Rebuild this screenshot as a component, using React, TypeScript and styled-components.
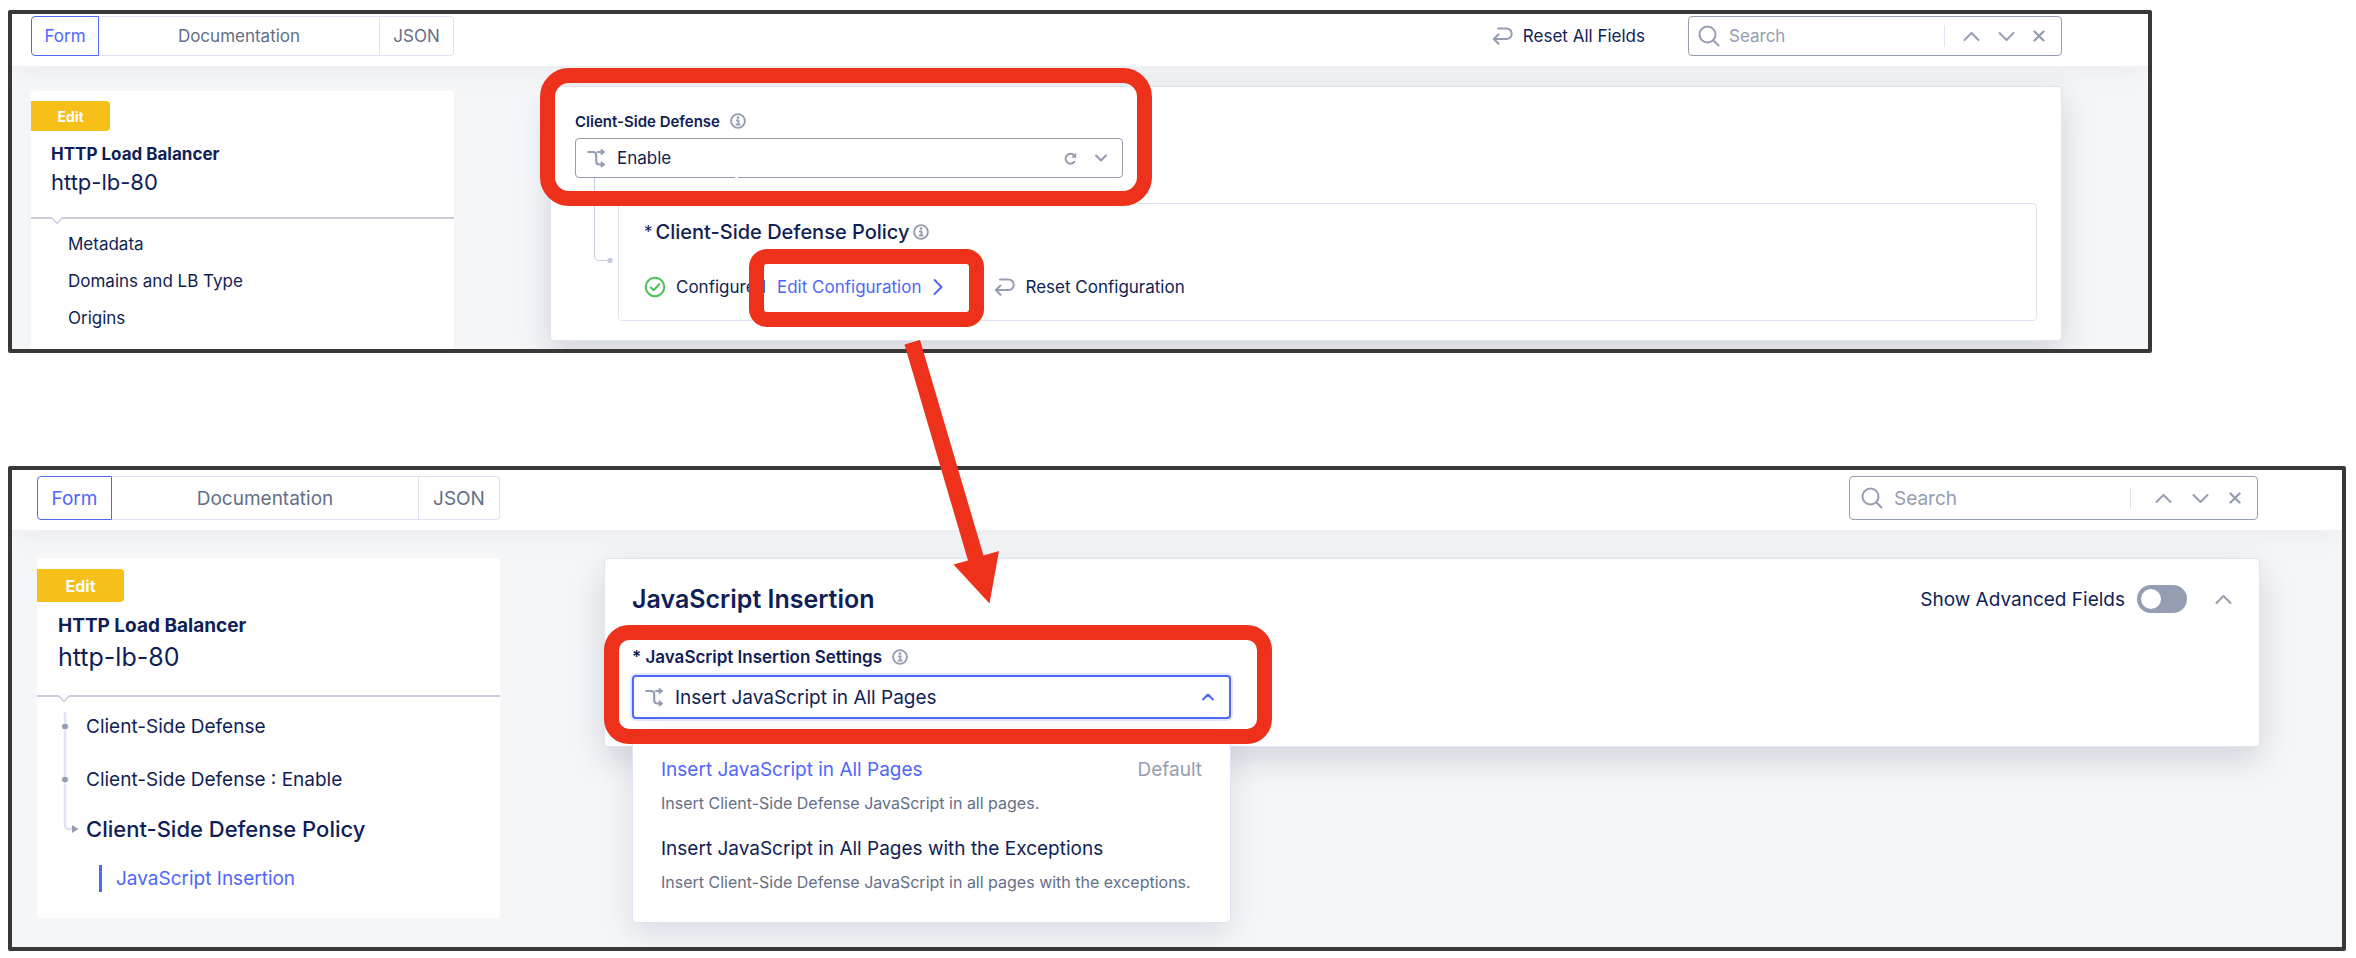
import React from 'react';
import styled, { createGlobalStyle, css, ThemeProvider } from 'styled-components';

const navy = '#0f1e57';
const blue = '#4f67fb';
const grey = '#959db2';
const slate = '#646f87';
const line = '#e0e3f2';
const red = '#ed311a';

const compact = {
  text: 17,
  title: 17,
  name: 22,
  label: 15,
  badge: 14,
  policy: 20,
  control: 40,
  header: '2px 86px 10px 19px',
  body: '20px 86px 0 19px',
  sidebar: 423,
  gap: 96,
  tabSide: 68,
  tabEnd: 74,
  search: 374,
  searchPad: 9,
  searchGap: 18,
  searchSplit: 18,
  badgeWidth: 79,
  badgeHeight: 30,
  sideTop: 10,
  sideInset: 20,
  titleLine: 24,
  nameLine: 32,
  sideGap: 19,
};

const regular = {
  ...compact,
  text: 19,
  title: 19,
  name: 25,
  label: 17,
  badge: 16,
  policy: 22,
  control: 44,
  header: '6px 84px 10px 25px',
  body: '28px 82px 29px 25px',
  sidebar: 463,
  gap: 104,
  tabSide: 75,
  tabEnd: 81,
  search: 409,
  searchPad: 11,
  searchGap: 20,
  searchSplit: 24,
  badgeWidth: 87,
  badgeHeight: 33,
  sideTop: 11,
  sideInset: 21,
  titleLine: 26,
  nameLine: 36,
  sideGap: 20,
};

type Density = typeof compact;
declare module 'styled-components' {
  export interface DefaultTheme extends Density {}
}

const GlobalStyle = createGlobalStyle`
  *, *::before, *::after { box-sizing: border-box; }
  body {
    margin: 0;
    background: #fff;
    color: ${navy};
    font-family: Inter, 'Liberation Sans', sans-serif;
  }
  button, input, select { font: inherit; color: inherit; }
  button { padding: 0; border: 0; background: none; }
  a { color: inherit; text-decoration: none; }
  h2, h3, p, ul { margin: 0; padding: 0; }
  ul { list-style: none; }
  svg { display: block; flex: none; }
`;

const Page = styled.main`
  position: relative;
  display: flex;
  flex-direction: column;
  gap: 113px;
  padding: 10px 10px 8px 8px;
`;

const Frame = styled.section<{ $inset?: number }>`
  margin-right: ${(p) => p.$inset ?? 0}px;
  border: 4px solid #383838;
  border-radius: 2px;
  background: #f5f6f8;
  font-size: ${(p) => p.theme.text}px;
  overflow: hidden;
`;

const Header = styled.header`
  position: relative;
  z-index: 1;
  display: flex;
  align-items: center;
  padding: ${(p) => p.theme.header};
  background: #fff;
  box-shadow: 0 8px 24px rgba(30, 32, 50, 0.04);
`;

const Tabs = styled.div`
  display: flex;
  width: ${(p) => p.theme.sidebar}px;
  height: ${(p) => p.theme.control}px;
`;

const Tab = styled.button<{ $active?: boolean; $grow?: boolean }>`
  flex: ${(p) => (p.$grow ? '1' : 'none')};
  width: ${(p) => p.theme.tabEnd}px;
  border: 1px solid ${line};
  border-left-width: 0;
  color: ${slate};
  &:first-child {
    width: ${(p) => p.theme.tabSide}px;
    border-left-width: 1px;
    border-radius: 4px 0 0 4px;
  }
  &:last-child {
    border-radius: 0 4px 4px 0;
  }
  ${(p) =>
    p.$active &&
    css`
      border-color: ${blue};
      color: ${blue};
    `}
`;

const Spacer = styled.div`
  flex: 1;
`;

const ActionButton = styled.button`
  display: flex;
  align-items: center;
  gap: 10px;
  line-height: 24px;
`;

const ResetAll = styled(ActionButton)`
  margin-right: 43px;
`;

const SearchBox = styled.div`
  display: flex;
  align-items: center;
  width: ${(p) => p.theme.search}px;
  height: ${(p) => p.theme.control}px;
  padding: 0 16px 0 ${(p) => p.theme.searchPad}px;
  border: 1px solid ${grey};
  border-radius: 4px;
  color: ${grey};
`;

const SearchInput = styled.input`
  flex: 1;
  min-width: 0;
  margin-left: ${(p) => p.theme.searchPad}px;
  padding: 0;
  border: 0;
  outline: 0;
  background: none;
  &::placeholder {
    color: ${grey};
    opacity: 1;
  }
`;

const SearchActions = styled.div`
  display: flex;
  align-items: center;
  gap: ${(p) => p.theme.searchGap}px;
  height: 22px;
  padding-left: ${(p) => p.theme.searchSplit}px;
  border-left: 1px solid ${line};
`;

const IconButton = styled.button`
  color: ${grey};
`;

const Body = styled.div`
  display: flex;
  gap: ${(p) => p.theme.gap}px;
  padding: ${(p) => p.theme.body};
`;

const Sidebar = styled.aside<{ $open?: boolean }>`
  flex: none;
  align-self: ${(p) => (p.$open ? 'stretch' : 'flex-start')};
  width: ${(p) => p.theme.sidebar}px;
  margin-top: ${(p) => (p.$open ? 5 : 0)}px;
  padding-top: ${(p) => p.theme.sideTop}px;
  border-radius: ${(p) => (p.$open ? '4px 4px 0 0' : '4px')};
  background: #fff;
`;

const Badge = styled.div`
  display: flex;
  align-items: center;
  justify-content: center;
  width: ${(p) => p.theme.badgeWidth}px;
  height: ${(p) => p.theme.badgeHeight}px;
  margin-bottom: 11px;
  border-radius: 0 4px 4px 0;
  background: #f6bf1a;
  color: #fff;
  font-size: ${(p) => p.theme.badge}px;
  font-weight: 700;
`;

const SideTitle = styled.h2`
  padding-left: ${(p) => p.theme.sideInset}px;
  font-size: ${(p) => p.theme.title}px;
  font-weight: 700;
  line-height: ${(p) => p.theme.titleLine}px;
`;

const SideName = styled.p`
  padding-left: ${(p) => p.theme.sideInset}px;
  margin-bottom: ${(p) => p.theme.sideGap}px;
  font-size: ${(p) => p.theme.name}px;
  line-height: ${(p) => p.theme.nameLine}px;
`;

const SideRule = styled.div`
  height: 2px;
  padding-left: ${(p) => p.theme.sideInset}px;
  background: #c9cddf;
`;

const SideList = styled.ul`
  padding: 7px 0 0 37px;
  line-height: 37px;
`;

const TreeNav = styled.nav`
  display: flex;
  gap: 7px;
  padding: 3px 0 14px 24px;
`;

const TreeDrawing = styled.svg`
  margin-top: 12px;
`;

const TreeList = styled.ul`
  line-height: 53px;
`;

const TreeCurrent = styled.li`
  font-size: ${(p) => p.theme.policy}px;
  font-weight: 500;
  line-height: 46px;
`;

const TreeChild = styled.li`
  display: flex;
  align-items: center;
  height: 52px;
  padding-left: 13px;
`;

const ActiveLink = styled.a`
  padding-left: 14px;
  border-left: 3px solid ${blue};
  color: ${blue};
  line-height: 27px;
`;

const Card = styled.section`
  flex: 1;
  min-width: 0;
  align-self: flex-start;
  border: 1px solid ${line};
  border-radius: 4px;
  background: #fff;
  box-shadow: 0 12px 32px rgba(30, 40, 80, 0.17);
`;

const DefenseCard = styled(Card)`
  margin-bottom: 8px;
  padding: 23px 24px 19px;
`;

const InsertionCard = styled(Card)`
  padding: 24px 27px 27px;
`;

const Field = styled.div<{ $width: number }>`
  position: relative;
  width: ${(p) => p.$width}px;
`;

const LabelRow = styled.div<{ $gap: number }>`
  display: flex;
  align-items: center;
  gap: 10px;
  height: 22px;
  margin-bottom: ${(p) => p.$gap}px;
  color: ${grey};
`;

const Label = styled.label`
  color: ${navy};
  font-size: ${(p) => p.theme.label}px;
  font-weight: 600;
`;

const SelectBox = styled.div<{ $open?: boolean }>`
  position: relative;
  display: flex;
  align-items: center;
  height: ${(p) => p.theme.control}px;
  padding: 0 15px 0 11px;
  border: 1px solid ${grey};
  border-radius: 4px;
  background: #fff;
  color: ${grey};
  ${(p) =>
    p.$open
      ? css`
          border: 2px solid ${blue};
          box-shadow: 0 0 0 2px #e3e7fe;
          color: ${blue};
        `
      : css`
          &::after {
            content: '';
            position: absolute;
            left: 159px;
            bottom: -1px;
            width: 3px;
            height: 1px;
            background: #fff;
          }
        `}
`;

const Select = styled.select`
  flex: 1;
  min-width: 0;
  height: 100%;
  margin-left: 11px;
  padding: 0;
  border: 0;
  outline: 0;
  appearance: none;
  background: none;
  color: ${navy};
`;

const SelectIcons = styled.div`
  display: flex;
  align-items: center;
  gap: 18px;
`;

const Nested = styled.div`
  display: flex;
  padding-left: 18px;
`;

const PolicyBox = styled.div`
  flex: 1;
  margin-top: 25px;
  padding: 14px 25px 21px;
  border: 1px solid ${line};
  border-radius: 4px;
`;

const PolicyTitle = styled.h3`
  display: flex;
  align-items: center;
  gap: 3px;
  margin-bottom: 29px;
  font-size: ${(p) => p.theme.policy}px;
  font-weight: 500;
  line-height: 28px;
`;

const Star = styled.span`
  font-size: 17px;
  font-weight: 400;
`;

const PolicyRow = styled.div`
  display: flex;
  align-items: center;
  line-height: 24px;
`;

const Status = styled.span`
  margin: 0 11px 0 10px;
`;

const EditArea = styled.div`
  position: relative;
  margin-right: 51px;
`;

const EditLink = styled.a`
  display: flex;
  align-items: center;
  gap: 12px;
  color: ${blue};
`;

const Highlight = styled.div<{ $inset: string; $radius: number }>`
  position: absolute;
  z-index: 3;
  inset: ${(p) => p.$inset};
  border: 15px solid ${red};
  border-radius: ${(p) => p.$radius}px;
  pointer-events: none;
`;

const CardHead = styled.div`
  display: flex;
  align-items: center;
  height: 32px;
  margin-bottom: 31px;
`;

const CardTitle = styled.h2`
  flex: 1;
  font-size: 25px;
  font-weight: 600;
`;

const Toggle = styled.input`
  appearance: none;
  width: 50px;
  height: 28px;
  margin: 0 28px 0 12px;
  padding: 4px;
  border-radius: 14px;
  background: ${grey};
  &::before {
    content: '';
    display: block;
    width: 20px;
    height: 20px;
    border-radius: 50%;
    background: #fff;
  }
`;

const Menu = styled.ul`
  position: absolute;
  z-index: 2;
  top: 86px;
  left: 0;
  right: 0;
  padding: 19px 28px 12px;
  border: 1px solid ${line};
  border-radius: 4px;
  background: #fff;
  box-shadow: 0 10px 30px rgba(30, 40, 90, 0.12);
`;

const Option = styled.li`
  display: flex;
  flex-direction: column;
  height: 79px;
`;

const OptionHead = styled.div<{ $selected?: boolean }>`
  display: flex;
  justify-content: space-between;
  color: ${(p) => (p.$selected ? blue : navy)};
  line-height: 36px;
`;

const OptionTag = styled.span`
  color: ${grey};
`;

const OptionText = styled.p`
  color: ${slate};
  font-size: 16px;
  line-height: 30px;
  white-space: nowrap;
`;

const Arrow = styled.svg`
  position: absolute;
  z-index: 4;
  top: 339px;
  left: 904px;
  pointer-events: none;
`;

const ResetIcon = () => (
  <svg width="21" height="18" viewBox="0 0 21 18" fill="none" stroke={grey} strokeWidth="2" strokeLinecap="round" strokeLinejoin="round">
    <path d="M6 1.500H14.500a5 5 0 0 1 0 10.500H2M6.500 7.500 1.800 12l4.700 4.700" />
  </svg>
);

const SearchIcon = () => (
  <svg width="22" height="22" viewBox="0 0 22 22" fill="none" stroke="currentColor" strokeWidth="2" strokeLinecap="round">
    <circle cx="9.500" cy="9.500" r="8" />
    <path d="m15.200 15.200 5.300 5.300" />
  </svg>
);

const Chevron = ({ up, small }: { up?: boolean; small?: boolean }) => (
  <svg
    width={small ? 12 : 17}
    height={small ? 8 : 11}
    viewBox="0 0 17 11"
    fill="none"
    stroke="currentColor"
    strokeWidth={small ? 3 : 2}
    strokeLinecap="round"
    strokeLinejoin="round"
  >
    <path d={up ? 'M1.500 9 8.500 2l7 7' : 'M1.500 2l7 7 7-7'} />
  </svg>
);

const CloseIcon = () => (
  <svg width="12" height="12" viewBox="0 0 12 12" stroke="currentColor" strokeWidth="2.300" strokeLinecap="round">
    <path d="m1.500 1.500 9 9M10.500 1.500l-9 9" />
  </svg>
);

const InfoIcon = () => (
  <svg width="16" height="16" viewBox="0 0 16 16" fill="none" stroke={grey} strokeWidth="1.900">
    <circle cx="8" cy="8" r="6.900" />
    <circle cx="8" cy="4.600" r="1.300" fill={grey} stroke="none" />
    <path d="M6 7.400H8.400V11.500M5.700 11.600h4.800" strokeWidth="1.900" />
  </svg>
);

const BranchIcon = () => (
  <svg width="19" height="20" viewBox="0 0 19 20" fill="none" stroke={grey} strokeWidth="2.200" strokeLinecap="round" strokeLinejoin="round">
    <path d="M1.200 4h4.800q3.200 0 3.200 3.200v6q0 3.300 3.300 3.300h4M11 4h5.500" />
    <path d="M14.300 1.600 17.400 4l-3.100 2.400zM14.300 14.100l3.100 2.400-3.100 2.400z" fill={grey} strokeWidth="1.300" />
  </svg>
);

const ReloadIcon = () => (
  <svg width="13" height="13" viewBox="0 0 13 13" fill="none" stroke={grey} strokeWidth="2.200" strokeLinecap="round">
    <path d="M10.300 9.800A4.900 4.900 0 1 1 9.600 2.900" />
    <path d="M12.200.8v5H7.200z" fill={grey} stroke="none" />
  </svg>
);

const CheckIcon = () => (
  <svg width="22" height="22" viewBox="0 0 22 22" fill="none" stroke="#47c35a" strokeWidth="2" strokeLinecap="round" strokeLinejoin="round">
    <circle cx="11" cy="11" r="9.300" />
    <path d="m6.800 11.500 2.900 2.700 5.500-6" />
  </svg>
);

const RightChevron = () => (
  <svg width="10" height="18" viewBox="0 0 10 18" fill="none" stroke="currentColor" strokeWidth="2" strokeLinecap="round" strokeLinejoin="round">
    <path d="m1.500 2 7 7-7 7" />
  </svg>
);

const RuleNotch = () => (
  <svg width="12" height="8" viewBox="0 0 12 8" fill="#fff">
    <path d="M0 0H12L6 6.500z" />
    <path d="M.5.5 6 6.500 11.500.5" fill="none" stroke="#c9cddf" strokeWidth="1.500" />
  </svg>
);

const Connector = () => (
  <svg width="25" height="90" viewBox="0 0 25 90" fill="none" stroke="#c5cadc" strokeWidth="1">
    <path d="M1.500 0V77.500q0 5 5 5h7" />
    <circle cx="17" cy="82.500" r="2.700" fill="#c5cadc" stroke="none" />
  </svg>
);

const TreeLines = () => (
  <TreeDrawing width="18" height="124" viewBox="0 0 18 124" fill="none">
    <path d="M4 0V113q0 4 4 4h4" stroke="#e0e3f1" strokeWidth="2.500" />
    <circle cx="4" cy="14.500" r="3.500" fill={grey} stroke="#fff" />
    <circle cx="4" cy="67.500" r="3.500" fill={grey} stroke="#fff" />
    <path d="M11 113v8l6.500-4z" fill={grey} />
  </TreeDrawing>
);

const HeaderTabs = () => (
  <Tabs>
    <Tab type="button" $active>Form</Tab>
    <Tab type="button" $grow>Documentation</Tab>
    <Tab type="button">JSON</Tab>
  </Tabs>
);

const Search = () => (
  <SearchBox>
    <SearchIcon />
    <SearchInput type="text" placeholder="Search" aria-label="Search" />
    <SearchActions>
      <IconButton type="button" aria-label="Previous match"><Chevron up /></IconButton>
      <IconButton type="button" aria-label="Next match"><Chevron /></IconButton>
      <IconButton type="button" aria-label="Clear search"><CloseIcon /></IconButton>
    </SearchActions>
  </SearchBox>
);

const SideHead = () => (
  <>
    <Badge>Edit</Badge>
    <SideTitle>HTTP Load Balancer</SideTitle>
    <SideName>http-lb-80</SideName>
    <SideRule><RuleNotch /></SideRule>
  </>
);

const LoadBalancerForm = () => (
  <ThemeProvider theme={compact}>
    <Frame $inset={194}>
      <Header>
        <HeaderTabs />
        <Spacer />
        <ResetAll type="button"><ResetIcon />Reset All Fields</ResetAll>
        <Search />
      </Header>
      <Body>
        <Sidebar $open>
          <SideHead />
          <SideList>
            {['Metadata', 'Domains and LB Type', 'Origins'].map((item) => (
              <li key={item}><a href="#section">{item}</a></li>
            ))}
          </SideList>
        </Sidebar>
        <DefenseCard>
          <Field $width={548}>
            <LabelRow $gap={6}>
              <Label htmlFor="defense">Client-Side Defense</Label>
              <InfoIcon />
            </LabelRow>
            <SelectBox>
              <BranchIcon />
              <Select id="defense" defaultValue="Enable">
                <option>Enable</option>
              </Select>
              <SelectIcons>
                <ReloadIcon />
                <Chevron small />
              </SelectIcons>
            </SelectBox>
            <Highlight $inset="-42px -29px -28px -35px" $radius={29} />
          </Field>
          <Nested>
            <Connector />
            <PolicyBox>
              <PolicyTitle>
                <Star>*</Star>
                Client-Side Defense Policy
                <InfoIcon />
              </PolicyTitle>
              <PolicyRow>
                <CheckIcon />
                <Status>Configured</Status>
                <EditArea>
                  <EditLink href="#policy">Edit Configuration<RightChevron /></EditLink>
                  <Highlight $inset="-26px -41px -28px -28px" $radius={18} />
                </EditArea>
                <ActionButton type="button"><ResetIcon />Reset Configuration</ActionButton>
              </PolicyRow>
            </PolicyBox>
          </Nested>
        </DefenseCard>
      </Body>
    </Frame>
  </ThemeProvider>
);

const InsertionForm = () => (
  <ThemeProvider theme={regular}>
    <Frame>
      <Header>
        <HeaderTabs />
        <Spacer />
        <Search />
      </Header>
      <Body>
        <Sidebar>
          <SideHead />
          <TreeNav>
            <TreeLines />
            <TreeList>
              <li><a href="#defense">Client-Side Defense</a></li>
              <li><a href="#enable">Client-Side Defense : Enable</a></li>
              <TreeCurrent>Client-Side Defense Policy</TreeCurrent>
              <TreeChild><ActiveLink href="#insertion">JavaScript Insertion</ActiveLink></TreeChild>
            </TreeList>
          </TreeNav>
        </Sidebar>
        <InsertionCard>
          <CardHead>
            <CardTitle>JavaScript Insertion</CardTitle>
            <label htmlFor="advanced">Show Advanced Fields</label>
            <Toggle id="advanced" type="checkbox" />
            <IconButton type="button" aria-label="Collapse"><Chevron up /></IconButton>
          </CardHead>
          <Field $width={599}>
            <LabelRow $gap={7}>
              <Label htmlFor="insertion">* JavaScript Insertion Settings</Label>
              <InfoIcon />
            </LabelRow>
            <SelectBox $open>
              <BranchIcon />
              <Select id="insertion" defaultValue="Insert JavaScript in All Pages">
                <option>Insert JavaScript in All Pages</option>
                <option>Insert JavaScript in All Pages with the Exceptions</option>
              </Select>
              <Chevron up small />
            </SelectBox>
            <Menu>
              <Option>
                <OptionHead $selected>
                  Insert JavaScript in All Pages
                  <OptionTag>Default</OptionTag>
                </OptionHead>
                <OptionText>Insert Client-Side Defense JavaScript in all pages.</OptionText>
              </Option>
              <Option>
                <OptionHead>Insert JavaScript in All Pages with the Exceptions</OptionHead>
                <OptionText>Insert Client-Side Defense JavaScript in all pages with the exceptions.</OptionText>
              </Option>
            </Menu>
            <Highlight $inset="-21px -41px -25px -28px" $radius={25} />
          </Field>
        </InsertionCard>
      </Body>
    </Frame>
  </ThemeProvider>
);

export default function App() {
  return (
    <>
      <GlobalStyle />
      <Page>
        <LoadBalancerForm />
        <InsertionForm />
        <Arrow width="96" height="266" viewBox="0 0 96 266" fill={red}>
          <path d="M.5 5.500 16 1 79.500 216.500 95 212 85.500 264.500 49.500 225.500 64 221.500z" />
        </Arrow>
      </Page>
    </>
  );
}
